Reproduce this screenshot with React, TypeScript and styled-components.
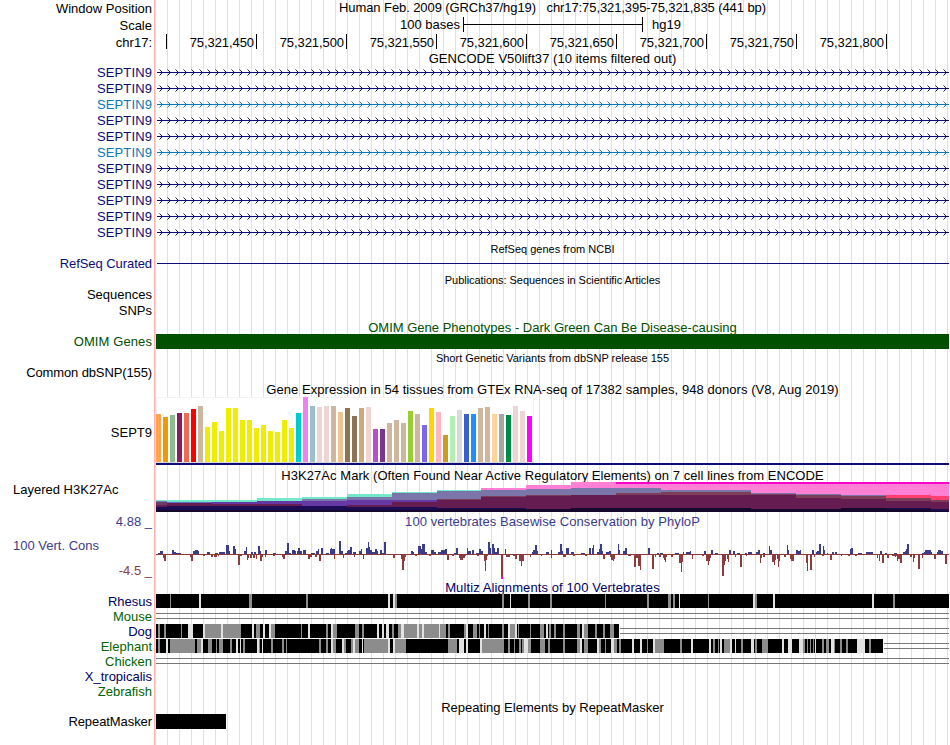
import styled, { createGlobalStyle } from 'styled-components';

type Mark = [number, number, number];

const NAVY = '#0c0c78';
const LIGHT_BLUE = '#0c78b4';
const GREEN = '#005000';
const POS = '#3c3c8c';
const NEG = '#8c3c3c';

const genes = [NAVY, NAVY, LIGHT_BLUE, NAVY, NAVY, LIGHT_BLUE, NAVY, NAVY, NAVY, NAVY, NAVY];

const positions = [450, 500, 550, 600, 650, 700, 750, 800];

// top of each bar, one per tissue
const tissueTops = [
    414, 417, 415, 413, 413, 409, 406, 427, 422, 431, 408, 408, 420, 420, 428, 425, 431, 432,
    420, 428, 413, 397, 406, 407, 406, 406, 412, 408, 416, 408, 407, 429, 429, 423, 420, 423,
    411, 414, 425, 408, 412, 435, 416, 410, 414, 414, 408, 407, 414, 414, 415, 406, 411, 416,
];

const tissueColors = [
    '#ffa54f', '#ee9a00', '#8fbc8f', '#8b1c62', '#ee6a50', '#ff0000', '#cdb79e',
    ...Array(13).fill('#eeee00'),
    '#00cdcd', '#ee82ee', '#9ac0cd', '#eed5d2', '#eed5d2', '#cdb79e', '#eec591', '#8b7355',
    '#8b7355', '#cdaa7d', '#eed5d2', '#b452cd', '#7a378b', '#cdb79e', '#cdb79e', '#cdb79e',
    '#9acd32', '#cdb79e', '#7a67ee', '#ffd700', '#ffb6c1', '#cd9b1d', '#b4eeb4', '#d9d9d9',
    '#3a5fcd', '#1e90ff', '#cdb79e', '#cdb79e', '#ffd39b', '#a6a6a6', '#008b45', '#eed5d2',
    '#eed5d2', '#ff00ff',
];

const layers: Record<string, string> = {
    t: '#74e8cb',
    s: '#7a76aa',
    b: '#5a6cc4',
    u: '#6638a4',
    v: '#693e6b',
    m: '#651c50',
    n: '#1c0c54',
    k: '#14082c',
    p: '#ff80d4',
    x: '#ff00cc',
    w: '#7c3e58',
    r: '#ff4070',
};

// start x, then [layer, top] from the top down
const acetylation: [number, [string, number][]][] = [
    [156, [['t', 500], ['s', 501], ['v', 502], ['m', 505], ['n', 507], ['k', 510]]],
    [167, [['t', 500], ['b', 502], ['m', 503], ['n', 506], ['k', 510]]],
    [212, [['t', 500], ['u', 502], ['m', 504], ['n', 506], ['k', 510]]],
    [257, [['t', 498], ['u', 501], ['m', 504], ['n', 506], ['k', 510]]],
    [302, [['t', 497], ['s', 499], ['u', 501], ['n', 506], ['k', 510]]],
    [347, [['t', 494], ['s', 497], ['u', 500], ['m', 505], ['n', 507], ['k', 510]]],
    [392, [['t', 492], ['s', 493], ['u', 500], ['m', 502], ['n', 507], ['k', 510]]],
    [437, [['t', 490], ['s', 491], ['w', 499], ['m', 500], ['n', 508], ['k', 509]]],
    [481, [['p', 488], ['s', 490], ['w', 496], ['m', 497], ['n', 508], ['k', 509]]],
    [526, [['p', 485], ['s', 489], ['w', 495], ['m', 496], ['k', 509]]],
    [571, [['p', 482], ['s', 488], ['m', 495], ['k', 508]]],
    [616, [['x', 482], ['p', 484], ['s', 488], ['w', 493], ['m', 495], ['k', 508]]],
    [661, [['x', 482], ['p', 484], ['s', 490], ['w', 492], ['m', 495], ['k', 508]]],
    [706, [['x', 482], ['p', 484], ['s', 490], ['w', 492], ['m', 495], ['k', 508]]],
    [751, [['x', 482], ['p', 484], ['s', 493], ['w', 494], ['m', 495], ['k', 509]]],
    [796, [['x', 482], ['p', 484], ['s', 494], ['w', 495], ['m', 498], ['k', 509]]],
    [841, [['x', 482], ['p', 484], ['s', 495], ['w', 496], ['m', 499], ['k', 508]]],
    [886, [['x', 482], ['p', 484], ['r', 495], ['w', 498], ['m', 501], ['n', 508], ['k', 509]]],
    [931, [['x', 482], ['p', 484], ['r', 496], ['w', 500], ['m', 502], ['n', 509], ['k', 511]]],
];

// x, width, score height
const conserved: Mark[] = [
    [158, 2, 1], [160, 3, 3], [172, 2, 4], [174, 2, 2], [176, 5, 1], [193, 2, 3], [195, 3, 4],
    [198, 1, 3], [207, 3, 2], [215, 3, 1], [219, 4, 2], [222, 3, 2], [226, 3, 9], [229, 1, 3],
    [233, 2, 8], [235, 1, 5], [244, 2, 3], [246, 1, 7], [251, 2, 2], [254, 2, 2], [258, 2, 8],
    [260, 1, 3], [265, 2, 4], [273, 3, 1], [285, 2, 3], [287, 2, 11], [289, 2, 1], [292, 3, 4],
    [295, 1, 3], [297, 1, 3], [298, 2, 6], [300, 2, 3], [303, 3, 4], [311, 4, 1], [316, 2, 3],
    [318, 1, 5], [321, 2, 6], [326, 3, 1], [330, 5, 5], [331, 1, 6], [339, 2, 13], [341, 1, 3],
    [345, 2, 1], [347, 3, 3], [340, 1, 13], [341, 2, 3], [348, 2, 4], [350, 2, 7], [353, 3, 2],
    [359, 2, 3], [361, 1, 5], [366, 2, 6], [368, 1, 12], [369, 1, 7], [370, 2, 4], [372, 3, 2],
    [375, 2, 5], [377, 1, 3], [380, 2, 4], [382, 2, 1], [384, 2, 12], [411, 2, 3], [413, 1, 2],
    [418, 3, 8], [421, 1, 5], [422, 3, 10], [425, 2, 2], [431, 3, 4], [434, 2, 2], [438, 3, 2],
    [441, 2, 4], [443, 3, 4], [445, 2, 5], [454, 3, 1], [456, 2, 6], [467, 1, 6], [468, 3, 3],
    [472, 2, 4], [476, 3, 1], [479, 2, 5], [481, 2, 3], [488, 2, 12], [490, 1, 6], [492, 2, 10],
    [494, 1, 6], [495, 3, 2], [497, 2, 6], [505, 1, 5], [532, 2, 2], [533, 2, 4], [535, 2, 9],
    [537, 1, 3], [546, 3, 2], [551, 1, 4], [558, 3, 2], [560, 2, 10], [562, 1, 3], [566, 3, 6],
    [568, 1, 3], [571, 3, 2], [581, 4, 1], [589, 2, 6], [592, 1, 6], [593, 1, 9], [597, 2, 2],
    [599, 1, 5], [600, 2, 10], [602, 1, 3], [606, 3, 2], [609, 2, 3], [618, 1, 10], [619, 1, 4],
    [623, 2, 3], [625, 2, 6], [648, 2, 6], [657, 2, 1], [660, 3, 1], [675, 4, 1], [683, 1, 2],
    [686, 4, 2], [690, 1, 3], [704, 2, 3], [711, 2, 4], [715, 3, 1], [729, 2, 4], [733, 2, 3],
    [737, 3, 1], [745, 2, 1], [748, 4, 2], [756, 2, 2], [758, 2, 4], [763, 2, 1], [769, 1, 8],
    [770, 2, 4], [787, 1, 9], [788, 1, 4], [796, 2, 4], [798, 3, 3], [800, 1, 4], [812, 2, 4],
    [816, 2, 2], [819, 2, 10], [817, 2, 3], [823, 1, 8], [824, 1, 4], [827, 1, 1], [832, 2, 2],
    [835, 2, 2], [850, 1, 5], [851, 2, 6], [858, 4, 1], [866, 6, 2], [871, 2, 2], [880, 2, 3],
    [885, 2, 1], [894, 3, 1], [903, 2, 2], [905, 1, 3], [906, 1, 5], [907, 2, 10], [922, 2, 1],
    [924, 1, 2], [925, 6, 4], [931, 1, 2], [937, 2, 2], [938, 3, 4], [941, 2, 3],
];

const accelerated: Mark[] = [
    [163, 1, 4], [164, 2, 7], [190, 1, 3], [191, 2, 7], [203, 2, 2], [211, 2, 3], [214, 3, 3],
    [218, 1, 2], [238, 2, 11], [240, 2, 2], [247, 1, 6], [248, 1, 4], [250, 2, 4], [253, 2, 4],
    [256, 1, 5], [260, 2, 7], [262, 1, 3], [265, 1, 3], [273, 2, 2], [282, 2, 3], [283, 2, 5],
    [308, 2, 5], [310, 2, 3], [315, 2, 3], [319, 2, 7], [334, 1, 5], [343, 1, 4], [354, 1, 3],
    [363, 1, 5], [393, 2, 4], [401, 1, 5], [402, 2, 16], [404, 1, 7], [405, 1, 3], [415, 2, 2],
    [429, 2, 2], [447, 2, 6], [452, 2, 2], [459, 1, 4], [460, 3, 6], [463, 2, 4], [465, 1, 2],
    [477, 2, 2], [484, 1, 7], [485, 1, 17], [486, 1, 6], [487, 1, 2], [501, 2, 23], [506, 4, 3],
    [513, 3, 2], [515, 2, 5], [519, 5, 7], [521, 1, 12], [523, 1, 4], [530, 1, 3], [541, 1, 2],
    [551, 1, 4], [563, 3, 3], [573, 2, 2], [585, 2, 2], [603, 2, 5], [610, 2, 3], [611, 2, 6],
    [613, 1, 7], [614, 1, 5], [628, 3, 2], [634, 2, 13], [636, 1, 4], [637, 2, 4], [638, 2, 12],
    [640, 1, 16], [652, 2, 15], [655, 1, 3], [659, 2, 3], [663, 1, 4], [664, 1, 6], [665, 1, 8],
    [666, 1, 3], [671, 2, 3], [679, 2, 9], [681, 1, 18], [682, 1, 8], [692, 1, 5], [702, 2, 2],
    [706, 2, 7], [708, 1, 11], [709, 1, 7], [710, 1, 4], [722, 2, 22], [724, 1, 11], [725, 1, 7],
    [727, 1, 5], [728, 1, 8], [735, 1, 3], [740, 2, 13], [746, 1, 2], [760, 1, 9], [761, 1, 4],
    [763, 2, 3], [772, 2, 8], [774, 1, 11], [775, 1, 6], [777, 1, 5], [778, 1, 13], [779, 1, 7],
    [784, 2, 3], [790, 1, 5], [791, 3, 7], [806, 1, 9], [807, 1, 17], [810, 2, 16], [814, 1, 3],
    [822, 2, 2], [830, 2, 6], [841, 1, 2], [848, 2, 2], [855, 2, 2], [877, 1, 4], [879, 1, 7],
    [882, 2, 9], [887, 2, 4], [892, 5, 2], [895, 1, 3], [897, 1, 7], [898, 3, 5], [900, 2, 9],
    [910, 2, 3], [913, 1, 8], [914, 1, 4], [918, 2, 15], [922, 1, 4], [934, 2, 5], [945, 2, 10],
];

// x, width, shade (0 grey, 1 pale)
const rhesus: Mark[] = [
    [170, 1, 0], [199, 2, 1], [249, 3, 0], [306, 2, 0], [388, 2, 1], [393, 2, 1], [395, 2, 0],
    [502, 2, 0], [510, 1, 1], [528, 2, 0], [550, 2, 0], [605, 1, 0], [647, 2, 0], [668, 3, 0],
    [673, 2, 0], [679, 1, 1], [708, 1, 0], [753, 2, 1], [755, 2, 0], [773, 2, 1], [872, 2, 1],
    [893, 2, 0],
];

const dog: Mark[] = [
    [158, 2, 0], [164, 2, 0], [181, 1, 0], [188, 5, 1], [203, 2, 1], [205, 16, 0], [221, 2, 1],
    [223, 18, 0], [252, 2, 1], [256, 4, 0], [263, 2, 1], [269, 2, 1], [271, 4, 0], [301, 1, 0],
    [308, 2, 1], [326, 2, 0], [331, 2, 1], [333, 4, 0], [355, 4, 0], [362, 2, 0], [377, 2, 1],
    [382, 2, 1], [386, 3, 1], [392, 2, 0], [398, 3, 0], [401, 3, 1], [404, 13, 0], [417, 2, 1],
    [419, 3, 0], [422, 2, 1], [424, 15, 0], [439, 1, 1], [440, 6, 0], [448, 2, 0], [464, 2, 0],
    [466, 2, 1], [473, 4, 0], [479, 1, 0], [484, 2, 1], [488, 1, 0], [502, 2, 0], [508, 2, 1],
    [510, 5, 0], [515, 2, 1], [518, 1, 0], [530, 1, 0], [540, 4, 0], [546, 2, 1], [549, 2, 0],
    [554, 2, 0], [563, 2, 0], [577, 3, 0], [582, 2, 1], [584, 4, 0], [595, 2, 0], [603, 2, 0],
    [610, 4, 0],
];

const elephant: Mark[] = [
    [158, 2, 0], [166, 2, 1], [170, 25, 0], [197, 4, 0], [201, 2, 1], [208, 4, 0], [216, 1, 0],
    [219, 4, 0], [230, 2, 0], [236, 2, 1], [240, 1, 1], [243, 2, 0], [257, 2, 1], [259, 1, 0],
    [262, 1, 1], [271, 2, 0], [282, 2, 0], [286, 1, 0], [319, 2, 0], [326, 2, 0], [331, 2, 1],
    [333, 3, 0], [342, 2, 1], [344, 2, 0], [351, 2, 0], [353, 2, 1], [355, 4, 0], [362, 1, 1],
    [364, 24, 0], [388, 2, 1], [393, 2, 1], [395, 11, 0], [448, 9, 0], [459, 1, 1], [460, 4, 1],
    [466, 2, 1], [480, 2, 1], [482, 22, 0], [508, 2, 0], [514, 1, 0], [519, 2, 0], [522, 2, 0],
    [524, 4, 1], [528, 3, 0], [540, 5, 0], [548, 2, 0], [563, 2, 0], [577, 3, 0], [580, 2, 1],
    [584, 4, 0], [597, 2, 1], [599, 2, 0], [605, 1, 0], [611, 3, 1], [614, 3, 0], [619, 2, 0],
    [632, 2, 1], [640, 2, 1], [647, 1, 0], [653, 2, 1], [655, 7, 0], [662, 2, 0], [680, 2, 0],
    [691, 2, 1], [709, 2, 1], [713, 2, 0], [718, 1, 0], [720, 2, 1], [724, 6, 0], [730, 2, 1],
    [735, 1, 1], [741, 2, 0], [751, 3, 1], [755, 2, 0], [762, 6, 0], [782, 2, 1], [788, 4, 1],
    [799, 4, 1], [803, 2, 0], [807, 1, 0], [810, 1, 0], [813, 1, 0], [815, 1, 1], [822, 2, 0],
    [826, 3, 0], [831, 3, 1], [834, 1, 0], [840, 2, 0], [846, 2, 0], [857, 8, 1], [869, 2, 0],
];

type species = {
    name: string;
    color: string;
    marks?: Mark[];
    end?: number;
    gap?: boolean;
};

const alignments: species[] = [
    { name: 'Rhesus', color: '#000064', marks: rhesus, end: 949 },
    { name: 'Mouse', color: '#006400', gap: true },
    { name: 'Dog', color: '#000064', marks: dog, end: 619, gap: true },
    { name: 'Elephant', color: '#006400', marks: elephant, end: 883, gap: true },
    { name: 'Chicken', color: '#006400', gap: true },
    { name: 'X_tropicalis', color: '#000064' },
    { name: 'Zebrafish', color: '#006400' },
];

type plotProps = {
    top: number;
    height: number;
    children?: React.ReactNode;
};

// every drawing uses the x and y of the whole browser image
const Plot = ({ top, height, children }: plotProps) => (
    <Drawing width={794} height={height} viewBox={`155 ${top} 794 ${height}`}>
        {children}
    </Drawing>
);

const GeneLine = ({ color }: { color: string }) => (
    <Plot top={0} height={16}>
        <rect x={157} y={8} width={792} height={1} fill={color} />
        {Array.from({ length: 99 }, (_, i) => 160 + i * 8).map(x => (
            <g key={x} fill={color}>
                <rect x={x} y={6} width={1} height={1} />
                <rect x={x + 1} y={7} width={1} height={1} />
                <rect x={x + 1} y={9} width={1} height={1} />
                <rect x={x} y={10} width={1} height={1} />
                <rect x={x - 1} y={5} width={1} height={1} opacity={0.5} />
                <rect x={x - 1} y={11} width={1} height={1} opacity={0.5} />
            </g>
        ))}
    </Plot>
);

const Alignment = ({ marks, end = 155, gap }: species) => (
    <Plot top={0} height={15}>
        {gap && (
            <g fill="#787878">
                <rect x={end + 1} y={4} width={949 - end} height={1} />
                <rect x={end + 1} y={9} width={949 - end} height={1} />
            </g>
        )}
        {marks && <rect x={156} y={0} width={end - 156} height={14} />}
        {marks?.map(([x, w, shade]) => (
            <rect key={x} x={x} y={0} width={w} height={14} fill={shade ? '#e1e1e1' : '#8c8c8c'} />
        ))}
    </Plot>
);

const App = () => {
    return (
        <>
            <GlobalStyle />
            <Browser>
                <Row height={17}>
                    <Label>Window Position</Label>
                    <Title drop={-1} spacing={-0.088}>
                        Human Feb. 2009 (GRCh37/hg19)&nbsp;&nbsp; chr17:75,321,395-75,321,835 (441 bp)
                    </Title>
                </Row>
                <Row height={17}>
                    <Label>Scale</Label>
                    <ScaleBar>
                        <span>100 bases</span>
                        <Ruler />
                        <span>hg19</span>
                    </ScaleBar>
                </Row>
                <Row height={17}>
                    <Label>chr17:</Label>
                    <Positions>
                        <Position first />
                        {positions.map(p => (
                            <Position key={p}>75,321,{p}</Position>
                        ))}
                    </Positions>
                </Row>
                <Row height={13}>
                    <Label />
                    <Title drop={1} spacing={0.05}>GENCODE V50lift37 (10 items filtered out)</Title>
                </Row>
                {genes.map((color, i) => (
                    <Row key={i} height={16}>
                        <Label drop={1} spacing={0.12} color={color}>SEPTIN9</Label>
                        <GeneLine color={color} />
                    </Row>
                ))}

                <Row height={15}>
                    <Label />
                    <Title small drop={2}>RefSeq genes from NCBI</Title>
                </Row>
                <Row height={17}>
                    <Label color={NAVY} spacing={-0.07}>RefSeq Curated</Label>
                    <Plot top={255} height={17}>
                        <rect x={157} y={263} width={792} height={1} fill={NAVY} />
                    </Plot>
                </Row>
                <Row height={15}>
                    <Label />
                    <Title small drop={1} spacing={-0.05}>
                        Publications: Sequences in Scientific Articles
                    </Title>
                </Row>
                <Row height={16}>
                    <Label>Sequences</Label>
                </Row>
                <Row height={16}>
                    <Label>SNPs</Label>
                </Row>

                <Row height={15}>
                    <Label />
                    <Title color={GREEN} drop={1}>
                        OMIM Gene Phenotypes - Dark Green Can Be Disease-causing
                    </Title>
                </Row>
                <Row height={16}>
                    <Label color={GREEN} spacing={0.1}>OMIM Genes</Label>
                    <Block width={793} color={GREEN} />
                </Row>
                <Row height={15}>
                    <Label />
                    <Title small drop={1}>Short Genetic Variants from dbSNP release 155</Title>
                </Row>
                <Row height={16}>
                    <Label spacing={-0.12}>Common dbSNP(155)</Label>
                </Row>

                <Row height={16}>
                    <Label />
                    <Title drop={1} spacing={0.057}>
                        Gene Expression in 54 tissues from GTEx RNA-seq of 17382 samples, 948 donors
                        (V8, Aug 2019)
                    </Title>
                </Row>
                <Row height={71}>
                    <Label>SEPT9</Label>
                    <Plot top={397} height={71}>
                        <rect x={156} y={397} width={378} height={66} fill="#f2f2f2" />
                        <rect x={157} y={398} width={376} height={64} fill="#fff" />
                        <rect x={156} y={462} width={378} height={1} fill="#d8d8d8" />
                        {tissueTops.map((y, i) => (
                            <rect
                                key={i}
                                x={156 + i * 7}
                                y={y}
                                width={5}
                                height={462 - y}
                                fill={tissueColors[i]}
                            />
                        ))}
                        <rect x={156} y={463} width={793} height={2} fill={NAVY} />
                    </Plot>
                </Row>

                <Row height={14}>
                    <Label />
                    <Title drop={1} spacing={0.057}>
                        H3K27Ac Mark (Often Found Near Active Regulatory Elements) on 7 cell lines
                        from ENCODE
                    </Title>
                </Row>
                <Row height={32}>
                    <Label left lift={16}>Layered H3K27Ac</Label>
                    <Plot top={482} height={32}>
                        {acetylation.map(([x, steps], i) =>
                            steps.map(([layer, y]) => (
                                <rect
                                    key={`${x}${layer}`}
                                    x={x}
                                    y={y}
                                    width={(acetylation[i + 1]?.[0] ?? 949) - x}
                                    height={512 - y}
                                    fill={layers[layer]}
                                />
                            ))
                        )}
                    </Plot>
                </Row>

                <Row height={15}>
                    <Label color={POS}>4.88 _</Label>
                    <Title color={POS} spacing={0.06}>
                        100 vertebrates Basewise Conservation by PhyloP
                    </Title>
                </Row>
                <Row height={52}>
                    <Limits>
                        <Label left color={POS}>100 Vert. Cons</Label>
                        <Label color={NEG}>-4.5 _</Label>
                    </Limits>
                    <Plot top={529} height={52}>
                        <rect x={156} y={554} width={793} height={1} fill={NEG} />
                        {conserved.map(([x, w, h], i) => (
                            <rect key={i} x={x} y={554 - h} width={w} height={h} fill={POS} />
                        ))}
                        {accelerated.map(([x, w, h], i) => (
                            <rect key={i} x={x} y={554} width={w} height={h} fill={NEG} />
                        ))}
                        <rect x={501} y={577} width={2} height={2} fill="#ff00ff" />
                    </Plot>
                </Row>

                <Row height={13}>
                    <Label />
                    <Title color="#000064" spacing={0.1}>Multiz Alignments of 100 Vertebrates</Title>
                </Row>
                {alignments.map(species => (
                    <Row key={species.name} height={15}>
                        <Label color={species.color}>{species.name}</Label>
                        <Alignment {...species} />
                    </Row>
                ))}

                <Row height={15}>
                    <Label />
                    <Title drop={1}>Repeating Elements by RepeatMasker</Title>
                </Row>
                <Row height={16}>
                    <Label spacing={-0.08}>RepeatMasker</Label>
                    <Block width={70} color="#000" />
                </Row>
            </Browser>
        </>
    );
};

export default App;

const GlobalStyle = createGlobalStyle`
    body {
        margin: 0;
        background: #fff;
    }
`;
const Browser = styled.div`
    width: 949px;
    height: 745px;
    overflow: hidden;
    font-family: 'Liberation Sans', Arial, sans-serif;
    font-size: 13px;
    color: #000;
    background:
        linear-gradient(to right, #fff 154px, #ffb4b4 154px) 0 0 / 155px 100% no-repeat,
        linear-gradient(to right, #dcdcff 1px, transparent 1px) 167px 0 / 12px 100%;
    background-color: #fff;
`;
const Row = styled.div.withConfig({ shouldForwardProp: p => p !== 'height' })<{ height: number }>`
    display: grid;
    grid-template-columns: 155px 794px;
    height: ${({ height }) => height}px;
    line-height: ${({ height }) => height}px;
    white-space: nowrap;
`;
const Label = styled.div.withConfig({
    shouldForwardProp: p => !['left', 'lift', 'drop', 'spacing', 'color'].includes(p),
})<{ left?: boolean; lift?: number; drop?: number; spacing?: number; color?: string }>`
    padding: ${({ left }) => (left ? '0 0 0 13px' : '0 3px 0 0')};
    margin-top: ${({ drop }) => drop || 0}px;
    text-align: ${({ left }) => (left ? 'left' : 'right')};
    line-height: ${({ lift }) => (lift ? `${lift}px` : 'inherit')};
    letter-spacing: ${({ spacing }) => spacing || 0}px;
    color: ${({ color }) => color || '#000'};
`;
const Title = styled.div.withConfig({
    shouldForwardProp: p => !['small', 'drop', 'spacing', 'color'].includes(p),
})<{ small?: boolean; drop?: number; spacing?: number; color?: string }>`
    padding-left: 1px;
    margin-top: ${({ drop }) => drop || 0}px;
    text-align: center;
    font-size: ${({ small }) => (small ? 11 : 13)}px;
    letter-spacing: ${({ spacing }) => spacing || 0}px;
    color: ${({ color }) => color || '#000'};
`;
const Limits = styled.div`
    display: flex;
    flex-direction: column;
    justify-content: space-between;
    padding: 9px 0 2px;
    line-height: 16px;
`;
const ScaleBar = styled.div`
    display: flex;
    justify-content: flex-start;
    gap: 3px;
    padding-left: 245px;
    line-height: 16px;

    span:last-child {
        margin-left: 6px;
    }
`;
const Ruler = styled.div`
    width: 178px;
    height: 15px;
    border: solid #000;
    border-width: 0 1px;
    background: linear-gradient(#000, #000) 0 7px / 100% 1px no-repeat;
`;
const Positions = styled.div`
    display: flex;
`;
const Position = styled.div.withConfig({ shouldForwardProp: p => p !== 'first' })<{
    first?: boolean;
}>`
    box-sizing: border-box;
    width: ${({ first }) => (first ? 12 : 90)}px;
    height: 15px;
    padding-right: 2px;
    border-right: 1px solid #000;
    text-align: right;
    letter-spacing: -0.07px;
`;
const Block = styled.div.withConfig({ shouldForwardProp: p => p !== 'width' && p !== 'color' })<{
    width: number;
    color: string;
}>`
    width: ${({ width }) => width}px;
    height: 15px;
    margin-left: 1px;
    background: ${({ color }) => color};
`;
const Drawing = styled.svg`
    display: block;
    shape-rendering: crispEdges;
`;
